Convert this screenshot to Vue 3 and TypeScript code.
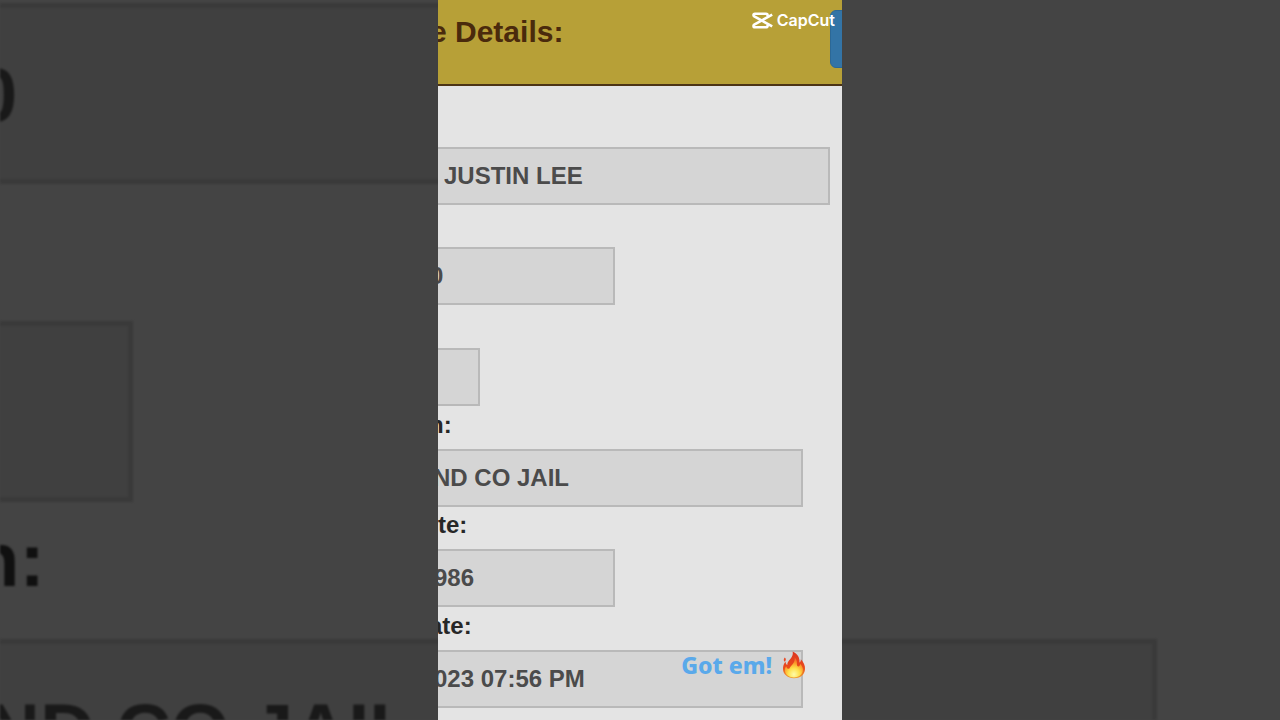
<script setup lang="ts">
interface Row {
  id: string
  label: string
  labelStart: number
  value: string
  start: number
  size: 'full' | 'wide' | 'medium' | 'small'
}

// Start positions are measured from the left edge of the visible frame.
const rows: Row[] = [
  { id: 'name', label: '', labelStart: 0, value: 'JUSTIN LEE', start: 6, size: 'full' },
  { id: 'number', label: '', labelStart: 0, value: '0', start: -8, size: 'medium' },
  { id: 'short', label: '', labelStart: 0, value: '', start: 0, size: 'small' },
  { id: 'place', label: 'n:', labelStart: -9, value: 'ND CO JAIL', start: -5, size: 'wide' },
  { id: 'birth', label: 'te:', labelStart: 0, value: '986', start: -4, size: 'medium' },
  { id: 'date', label: 'ate:', labelStart: -9, value: '023 07:56 PM', start: -4, size: 'wide' },
]

const backdropRows = [
  { label: '', labelStart: 0, value: '0', start: -25, size: 'medium' },
  { label: '', labelStart: 0, value: '', start: 0, size: 'small' },
  { label: 'n:', labelStart: -27, value: 'ND CO JAIL', start: -15, size: 'wide' },
]
</script>

<template>
  <div class="stage">
    <div class="backdrop" aria-hidden="true">
      <div v-for="(row, i) in backdropRows" :key="i" class="back-row">
        <div class="back-label" :style="{ textIndent: row.labelStart + 'px' }">{{ row.label }}</div>
        <div class="back-field" :class="row.size" :style="{ textIndent: row.start + 'px' }">{{ row.value }}</div>
      </div>
    </div>

    <main class="frame">
      <header class="header">
        <h1 class="title">e Details:</h1>
        <button class="action" type="button" aria-label="Action"></button>
      </header>

      <form class="form" @submit.prevent>
        <div v-for="row in rows" :key="row.id" class="row">
          <label :for="row.id" class="label" :style="{ textIndent: row.labelStart + 'px' }">{{ row.label }}</label>
          <input
            :id="row.id"
            class="field"
            :class="row.size"
            :style="{ '--start': row.start + 'px' }"
            type="text"
            :value="row.value"
            readonly
          />
        </div>
      </form>

      <div class="watermark">
        <svg width="21" height="17" viewBox="0 0 21 17" fill="none" stroke="#fff" stroke-width="2.6" stroke-linejoin="round">
          <path d="M15.6 4.2V3.2Q15.6 1.7 14 1.7H3Q1.5 1.7 1.5 3.1V3.3Q1.5 4 2.2 4.4L20.2 14.4" />
          <path d="M15.6 12.8V13.8Q15.6 15.3 14 15.3H3Q1.5 15.3 1.5 13.9V13.7Q1.5 13 2.2 12.6L20.2 2.6" />
        </svg>
        <span>CapCut</span>
      </div>

      <p class="caption">
        <span>Got em!</span>
        <svg width="24" height="28" viewBox="0 0 24 28">
          <defs>
            <linearGradient id="flame-outer" x1="0" y1="0" x2="0" y2="1">
              <stop offset="0" stop-color="#dc3420" />
              <stop offset="0.6" stop-color="#ea4b1c" />
              <stop offset="1" stop-color="#f0a030" />
            </linearGradient>
            <radialGradient id="flame-inner" cx="0.5" cy="0.85" r="0.8">
              <stop offset="0" stop-color="#fffba8" />
              <stop offset="0.4" stop-color="#ffe04a" />
              <stop offset="0.75" stop-color="#fa9428" />
              <stop offset="1" stop-color="#f2622a" />
            </radialGradient>
          </defs>
          <path fill="url(#flame-outer)" d="M10.7.4C15.5 2.5 18 6.8 17.5 11.5C18.6 10.8 19 9.5 18.8 8.2C21.6 11.1 23.3 14.5 23 18.2C22.7 24 18 27.2 12 27.2C5.7 27.2 1.1 23.6 1 18.1C.9 15.2 1.8 12.7 3.5 10.6C3.6 12.5 4.2 13.5 5.3 14.1C5 8.7 11.9 7.4 10.7.4Z" />
          <path fill="#e84a25" d="M2.8 6.4C4.3 7.6 4.2 9.4 2.5 10.8C1.4 9.3 1.6 7.8 2.8 6.4Z" />
          <path fill="url(#flame-inner)" d="M12.6 6.5C16.4 10 13.9 13.2 15.6 15.3C17.2 15.7 18.3 14.5 18.3 12.8C20.5 15.4 21.6 18.2 20.6 21C19.4 24.6 16.2 26.4 12 26.4C7.4 26.4 3.8 24.3 3.1 20.8C2.6 18.7 3 16.8 4.1 15.2C4.7 17.2 6.1 18.2 7.4 17.6C9.1 13.9 13.5 12 12.6 6.5Z" />
        </svg>
      </p>
    </main>
  </div>
</template>

<style>
body {
  margin: 0;
  background: #444;
}
</style>

<style scoped>
.stage {
  position: relative;
  display: flex;
  justify-content: center;
  height: 100vh;
  overflow: hidden;
  background: #444;
  font-family: "Liberation Sans", Arial, sans-serif;
  font-weight: 700;
}

.backdrop {
  position: absolute;
  inset: 0;
  overflow: hidden;
  font-size: 76px;
  white-space: nowrap;
  filter: blur(1px);
}

.back-row {
  display: flex;
  flex-direction: column;
}

.back-row:first-child .back-label {
  height: 3px;
  padding: 0;
}

.back-label {
  box-sizing: border-box;
  height: 137px;
  padding-top: 14px;
  line-height: 87px;
  color: #101010;
}

.back-field {
  box-sizing: border-box;
  height: 181px;
  border: 5px solid #3a3a3a;
  border-left: 0;
  background: #404040;
  color: #191919;
  line-height: 174px;
}

.back-field.small {
  width: 133px;
}

.back-field.medium {
  width: 561px;
}

.back-field.wide {
  width: 1157px;
}

.frame {
  position: relative;
  display: flex;
  flex-direction: column;
  height: 100%;
  aspect-ratio: 101 / 180;
  overflow: hidden;
  background: #e4e4e4;
}

.header {
  box-sizing: border-box;
  display: flex;
  justify-content: space-between;
  align-items: flex-start;
  height: 86px;
  padding-top: 10px;
  border-bottom: 2px solid #4c3415;
  background: #b7a037;
}

.title {
  margin: 0;
  font-size: 30px;
  line-height: 44px;
  text-indent: -8px;
  color: #4a2a0c;
  white-space: nowrap;
}

.action {
  width: 60px;
  height: 58px;
  margin: 0 -48px 0 0;
  padding: 0;
  border: 1px solid #2c6896;
  border-radius: 6px;
  background: #3374a6;
}

.form {
  flex: 1;
  display: grid;
  grid-template-rows: repeat(6, 1fr);
  padding: 18px 0 12px;
}

.row {
  display: flex;
  flex-direction: column;
  justify-content: flex-end;
}

.label {
  padding-bottom: 10px;
  font-size: 24px;
  line-height: 28px;
  color: #272727;
}

.field {
  box-sizing: border-box;
  height: 58px;
  margin: 0 0 0 -24px;
  padding: 0 0 0 calc(22px + var(--start));
  border: 2px solid #b9b9b9;
  border-radius: 0;
  outline: 0;
  background: #d5d5d5;
  color: #4b4b4b;
  font: inherit;
  font-size: 24px;
}

.field.full {
  width: 416px;
}

.field.wide {
  width: 389px;
}

.field.medium {
  width: 201px;
}

.field.small {
  width: 66px;
}

.watermark {
  position: absolute;
  top: 10px;
  right: 7px;
  display: flex;
  align-items: center;
  gap: 4px;
  color: #fff;
  font-family: Inter, sans-serif;
  font-size: 16px;
  font-weight: 600;
  line-height: 20px;
}

.caption {
  position: absolute;
  right: 36px;
  bottom: 39px;
  display: flex;
  align-items: center;
  gap: 10px;
  margin: 0;
  color: #5aa9ea;
  font-family: "Noto Sans", sans-serif;
  font-size: 23px;
  font-weight: 800;
  line-height: 32px;
}
</style>
